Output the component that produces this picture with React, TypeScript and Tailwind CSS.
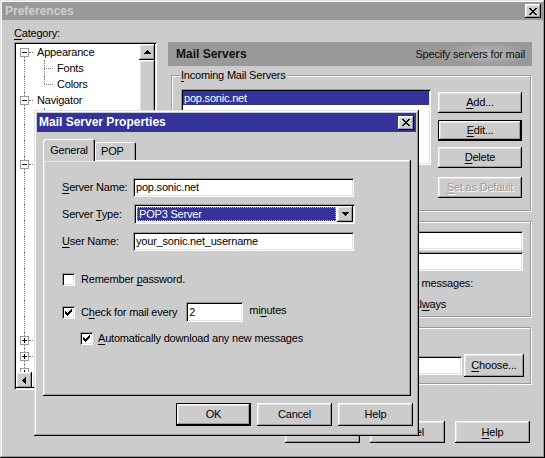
import React from 'react';

// win98-ish bevels
const raised = 'shadow-[inset_-1px_-1px_0_#000,inset_1px_1px_0_#fff,inset_-2px_-2px_0_#999,inset_2px_2px_0_#e3e3e3]';
const sunken = 'shadow-[inset_1px_1px_0_#999,inset_-1px_-1px_0_#fff,inset_2px_2px_0_#000,inset_-2px_-2px_0_#e3e3e3]';
const frame = 'shadow-[inset_-1px_-1px_0_#000,inset_1px_1px_0_#e3e3e3,inset_-2px_-2px_0_#999,inset_2px_2px_0_#fff]';
const etched = 'border border-[#999] shadow-[inset_1px_1px_0_#fff,1px_1px_0_#fff]';

const X_ROWS = ['##....##', '.##..##.', '..####..', '...##...', '..####..', '.##..##.', '##....##'];
const CHECK_ROWS = ['......#', '.....##', '#...###', '##.###.', '#####..', '.###...', '..#....'];
const DOWN_ROWS = ['#######', '.#####.', '..###..', '...#...'];
const UP_ROWS = ['...#...', '..###..', '.#####.', '#######'];
const LEFT_ROWS = ['...#', '..##', '.###', '####', '.###', '..##', '...#'];

function Pix({ rows, color = '#000' }: { rows: string[]; color?: string }) {
  const w = rows[0].length;
  const h = rows.length;
  const rects: React.ReactNode[] = [];
  rows.forEach((r, y) =>
    [...r].forEach((c, x) => {
      if (c === '#') rects.push(<rect key={`${x}-${y}`} x={x} y={y} width={1} height={1} />);
    })
  );
  return (
    <svg width={w} height={h} viewBox={`0 0 ${w} ${h}`} fill={color} shapeRendering="crispEdges">
      {rects}
    </svg>
  );
}

const CloseBtn = () => (
  <div className={`w-[16px] h-[14px] bg-[#ccc] flex items-center justify-center ${raised}`}>
    <Pix rows={X_ROWS} />
  </div>
);

function Button({
  children,
  def,
  disabled,
  className = '',
}: {
  children: React.ReactNode;
  def?: boolean;
  disabled?: boolean;
  className?: string;
}) {
  return (
    <div className={`${def ? 'border border-black' : ''} ${className}`}>
      <div
        className={`w-full h-full flex items-center justify-center ${raised} ${
          disabled ? 'text-[#999] [text-shadow:1px_1px_0_#fff]' : ''
        }`}
      >
        {children}
      </div>
    </div>
  );
}

const U = ({ children }: { children: React.ReactNode }) => <span className="underline underline-offset-2">{children}</span>;

function Checkbox({ checked }: { checked?: boolean }) {
  return (
    <div className={`w-[13px] h-[13px] bg-white shrink-0 flex items-center justify-center ${sunken}`}>
      {checked && <Pix rows={CHECK_ROWS} />}
    </div>
  );
}

type Node = { label: string; level: 0 | 1; kind?: 'minus' | 'plus'; last?: boolean };

const tree: Node[] = [
  { label: 'Appearance', level: 0, kind: 'minus' },
  { label: 'Fonts', level: 1 },
  { label: 'Colors', level: 1, last: true },
  { label: 'Navigator', level: 0, kind: 'minus' },
  { label: 'Languages', level: 1 },
  { label: 'Applications', level: 1 },
  { label: 'Smart Browsing', level: 1, last: true },
  { label: 'Mail & Newsgroups', level: 0, kind: 'minus' },
  { label: 'Identity', level: 1 },
  { label: 'Mail Servers', level: 1 },
  { label: 'Newsgroup Servers', level: 1 },
  { label: 'Addressing', level: 1 },
  { label: 'Messages', level: 1 },
  { label: 'Window Settings', level: 1 },
  { label: 'Copies and Folders', level: 1 },
  { label: 'Formatting', level: 1 },
  { label: 'Return Receipts', level: 1 },
  { label: 'Disk Space', level: 1, last: true },
  { label: 'Roaming Access', level: 0, kind: 'plus' },
  { label: 'Composer', level: 0, kind: 'plus' },
  { label: 'Offline', level: 0, kind: 'plus' },
  { label: 'Advanced', level: 0, kind: 'plus' },
];

function TreeRow({ node, first }: { node: Node; first: boolean }) {
  return (
    <div className="flex h-[16px] items-center whitespace-nowrap">
      <div className="relative w-[17px] h-full shrink-0">
        <div className={`absolute left-[8px] border-l border-dotted border-[#808080] ${first ? 'top-[8px]' : 'top-0'} bottom-0`} />
        {node.level === 0 && (
          <>
            <div className="absolute left-[13px] top-[8px] w-[4px] border-t border-dotted border-[#808080]" />
            <div className="absolute left-[4px] top-[4px] w-[9px] h-[9px] bg-white border border-[#999] flex items-center justify-center">
              <div className="w-[5px] h-[1px] bg-black" />
              {node.kind === 'plus' && <div className="absolute w-[1px] h-[5px] bg-black" />}
            </div>
          </>
        )}
      </div>
      {node.level === 1 && (
        <div className="relative w-[20px] h-full shrink-0">
          <div className={`absolute left-[11px] top-0 border-l border-dotted border-[#808080] ${node.last ? 'h-[8px]' : 'bottom-0'}`} />
          <div className="absolute left-[11px] top-[8px] w-[9px] border-t border-dotted border-[#808080]" />
        </div>
      )}
      <span className="ml-[4px]">{node.label}</span>
    </div>
  );
}

function CategoryTree() {
  return (
    <div className={`w-[143px] h-[348px] bg-white p-[2px] flex flex-col ${sunken}`}>
      <div className="flex flex-1 min-h-0">
        <div className="flex-1 overflow-hidden">
          {tree.map((n, i) => (
            <TreeRow key={n.label} node={n} first={i === 0} />
          ))}
        </div>
        <div className="w-[16px] flex flex-col bg-[#e6e6e6]">
          <div className={`h-[16px] bg-[#ccc] flex items-center justify-center ${raised}`}>
            <Pix rows={UP_ROWS} />
          </div>
          <div className={`h-[240px] bg-[#ccc] ${raised}`} />
          <div className="flex-1" />
          <div className={`h-[16px] bg-[#ccc] flex items-center justify-center ${raised}`}>
            <Pix rows={DOWN_ROWS} />
          </div>
        </div>
      </div>
      <div className="h-[16px] flex bg-[#e6e6e6]">
        <div className={`w-[16px] h-full bg-[#ccc] flex items-center justify-center ${raised}`}>
          <Pix rows={LEFT_ROWS} />
        </div>
        <div className={`w-[60px] h-full bg-[#ccc] ${raised}`} />
        <div className="flex-1" />
        <div className="w-[16px] h-full bg-[#ccc]" />
      </div>
    </div>
  );
}

function MailServersPanel() {
  return (
    <div className="ml-[11px] mt-[15px] w-[364px] flex flex-col">
      <div className="relative h-[24px] bg-[#999] flex items-center justify-between pl-[8px] pr-[7px] overflow-hidden">
        <div className="absolute left-[280px] top-0 w-[80px] h-full bg-[radial-gradient(ellipse_at_center,#b8b8b8_0%,transparent_70%)]" />
        <span className="relative font-bold text-[12px] tracking-normal text-[#111]">Mail Servers</span>
        <span className="relative text-[#111]">Specify servers for mail</span>
      </div>

      <div className={`relative mt-[9px] ml-[3px] w-[360px] h-[136px] flex ${etched}`}>
        <span className="absolute -top-[7px] left-[8px] px-[1px] bg-[#ccc] leading-[13px]">
          <U>I</U>ncoming Mail Servers
        </span>
        <div className={`ml-[9px] mt-[13px] w-[250px] h-[76px] bg-white p-[2px] ${sunken}`}>
          <div className="h-[14px] leading-[14px] bg-[#333399] text-white pl-[1px]">pop.sonic.net</div>
        </div>
        <div className="ml-[7px] flex flex-col">
          <Button className="mt-[16px] w-[84px] h-[21px]">
            <U>A</U>dd...
          </Button>
          <Button def className="mt-[7px] w-[84px] h-[21px]">
            <U>E</U>dit...
          </Button>
          <Button className="mt-[6px] w-[84px] h-[21px]">
            <U>D</U>elete
          </Button>
          <Button disabled className="mt-[9px] w-[84px] h-[21px]">
            <U>S</U>et as Default
          </Button>
        </div>
      </div>

      <div className={`relative mt-[10px] ml-[3px] w-[360px] h-[96px] flex flex-col ${etched}`}>
        <div className={`self-end mt-[9px] mr-[7px] w-[230px] h-[19px] bg-white ${sunken}`} />
        <div className={`self-end mt-[2px] mr-[7px] w-[230px] h-[19px] bg-white ${sunken}`} />
        <div className="mt-[6px] w-[301px] text-right leading-[13px] whitespace-nowrap">Move new messages:</div>
        <div className="mt-[8px] w-[274px] text-right leading-[13px] whitespace-nowrap">
          Al<U>w</U>ays
        </div>
      </div>

      <div className={`relative mt-[10px] ml-[3px] w-[360px] h-[57px] ${etched}`}>
        <div className="mt-[26px] mr-[6px] flex justify-end items-center">
          <div className={`w-[150px] h-[19px] bg-white ${sunken}`} />
          <Button className="ml-[2px] w-[60px] h-[23px]">
            <U>C</U>hoose...
          </Button>
        </div>
      </div>
    </div>
  );
}

function MailServerDialog() {
  return (
    <div className={`absolute left-[34px] top-[110px] w-[385px] h-[326px] bg-[#ccc] p-[3px] flex flex-col ${frame}`}>
      <div className="h-[19px] bg-[#333399] flex items-center justify-between pl-[2px] pr-[2px]">
        <span className="text-white font-bold text-[12px] tracking-normal">Mail Server Properties</span>
        <CloseBtn />
      </div>

      <div className="mt-[7px] ml-[6px] h-[21px] flex items-end">
        <div className="relative z-10 w-[52px] h-[22px] -mb-[1px] bg-[#ccc] flex items-center justify-center rounded-t-[2px] shadow-[inset_1px_1px_0_#fff,inset_-1px_0_0_#000,inset_-2px_0_0_#999]">
          General
        </div>
        <div className="w-[41px] h-[18px] bg-[#ccc] flex items-center pl-[6px] rounded-t-[2px] shadow-[inset_1px_1px_0_#fff,inset_-1px_0_0_#000,inset_-2px_0_0_#999]">
          POP
        </div>
      </div>

      <div className={`ml-[6px] w-[368px] h-[236px] pt-[18px] pl-[19px] flex flex-col ${raised}`}>
        <div className="flex items-center h-[19px]">
          <span className="w-[71px]">
            <U>S</U>erver Name:
          </span>
          <div className={`w-[221px] h-[19px] bg-white pl-[3px] flex items-center ${sunken}`}>pop.sonic.net</div>
        </div>
        <div className="mt-[7px] flex items-center h-[20px]">
          <span className="w-[72px]">
            Server <U>T</U>ype:
          </span>
          <div className={`w-[221px] h-[20px] bg-white p-[2px] flex ${sunken}`}>
            <div className="flex-1 m-[1px] bg-[#333399] text-white pl-[1px] flex items-center border border-dotted border-[#bbb]">
              POP3 Server
            </div>
            <div className={`w-[16px] h-full bg-[#ccc] flex items-center justify-center ${raised}`}>
              <Pix rows={DOWN_ROWS} />
            </div>
          </div>
        </div>
        <div className="mt-[8px] flex items-center h-[19px]">
          <span className="w-[71px]">
            <U>U</U>ser Name:
          </span>
          <div className={`w-[221px] h-[19px] bg-white pl-[3px] flex items-center ${sunken}`}>your_sonic.net_username</div>
        </div>

        <div className="mt-[22px] flex items-center h-[13px]">
          <Checkbox />
          <span className="ml-[6px]">
            Remember <U>p</U>assword.
          </span>
        </div>

        <div className="mt-[16px] flex items-center h-[20px]">
          <Checkbox checked />
          <span className="ml-[6px]">
            C<U>h</U>eck for mail every
          </span>
          <div className={`ml-[9px] w-[57px] h-[20px] bg-white pl-[3px] flex items-center ${sunken}`}>2</div>
          <span className="ml-[6px] -mt-[3px]">
            mi<U>n</U>utes
          </span>
        </div>

        <div className="mt-[10px] pl-[18px] flex items-center h-[13px]">
          <Checkbox checked />
          <span className="ml-[5px]">
            <U>A</U>utomatically download any new messages
          </span>
        </div>
      </div>

      <div className="mt-[7px] mr-[3px] flex justify-end gap-[6px]">
        <Button def className="w-[75px] h-[23px]">
          OK
        </Button>
        <Button className="w-[75px] h-[23px]">Cancel</Button>
        <Button className="w-[75px] h-[23px]">Help</Button>
      </div>
    </div>
  );
}

export default function App() {
  return (
    <div
      className={`relative w-[545px] h-[458px] bg-[#ccc] p-[2px] overflow-hidden font-['Liberation_Sans',Arial,sans-serif] text-[11px] tracking-[-0.2px] text-black leading-[13px] ${frame}`}
    >
      <div className="h-[18px] bg-[#999] flex items-center justify-between pl-[3px] pr-[2px]">
        <span className="text-[#d0d0d0] font-bold text-[12px] tracking-normal">Preferences</span>
        <CloseBtn />
      </div>

      <div className="flex pl-[12px] pt-[7px]">
        <div className="flex flex-col">
          <span className="h-[13px]">
            <U>C</U>ategory:
          </span>
          <div className="mt-[2px]">
            <CategoryTree />
          </div>
        </div>
        <MailServersPanel />
      </div>

      <div className="mt-[31px] pr-[13px] flex justify-end gap-[10px]">
        <Button className="w-[75px] h-[22px]">OK</Button>
        <Button className="w-[75px] h-[22px]">Cancel</Button>
        <Button className="w-[75px] h-[22px]">
          <U>H</U>elp
        </Button>
      </div>

      <MailServerDialog />
    </div>
  );
}
